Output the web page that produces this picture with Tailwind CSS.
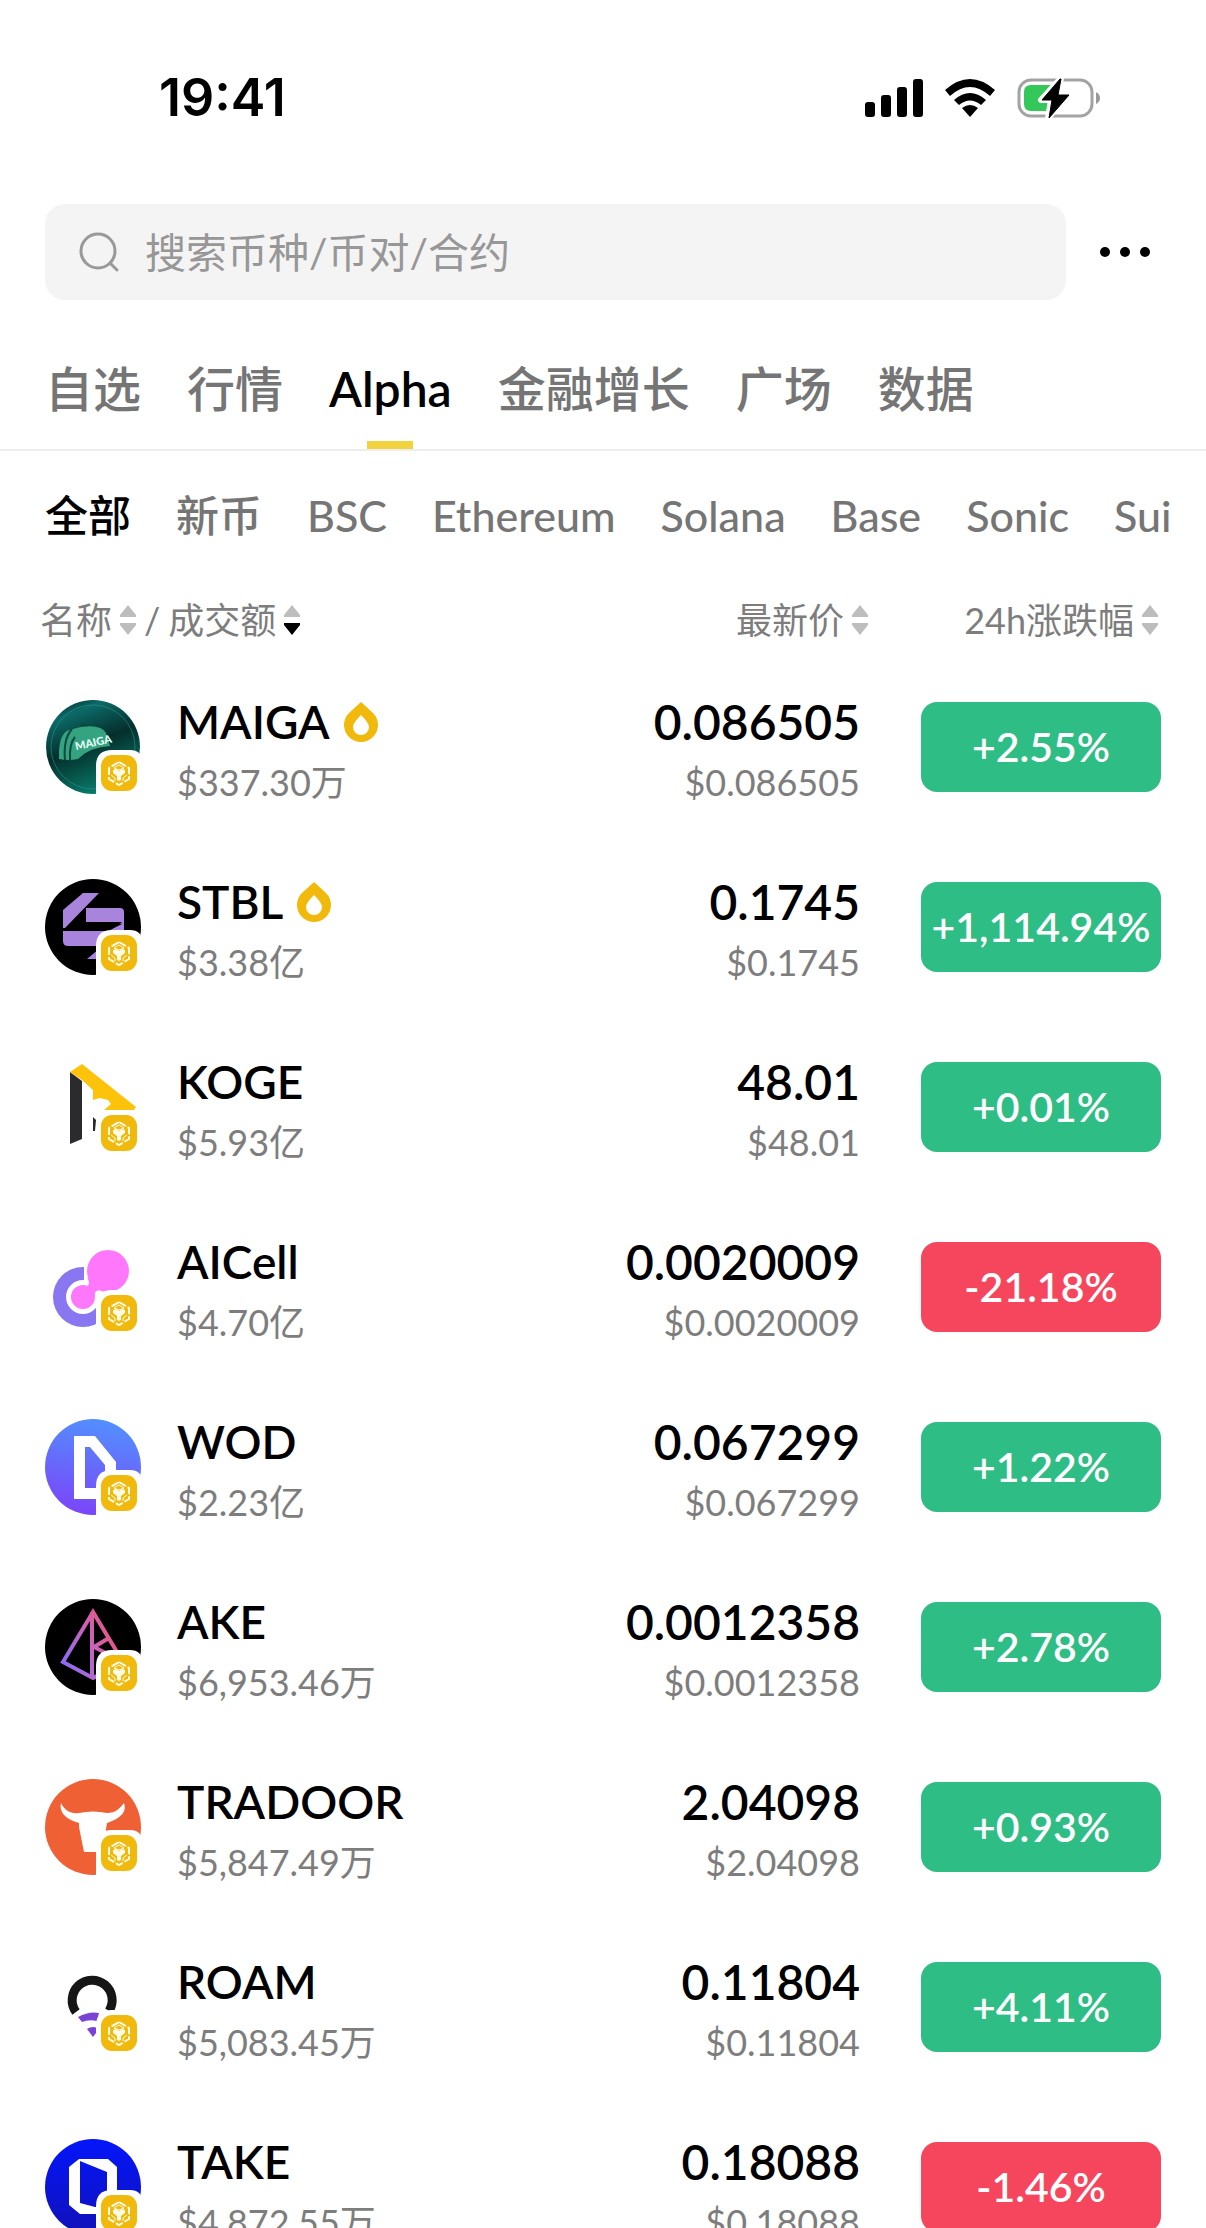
<!DOCTYPE html>
<html lang="zh-CN">
<head>
  <meta charset="utf-8">
  <meta name="viewport" content="width=device-width, initial-scale=1">
  <title>Alpha 行情</title>
  <script src="https://cdn.jsdelivr.net/npm/@tailwindcss/browser@4"></script>
</head>
<body class="flex h-screen flex-col overflow-hidden bg-white font-['Lato','Noto_Sans_CJK_SC',sans-serif] text-black">

  <!-- status bar -->
  <div class="flex h-[196px] shrink-0 items-center justify-between pr-[106px] pl-[159px]">
    <span class="font-['Inter',sans-serif] text-[52px] font-semibold">19:41</span>
    <div class="flex items-center gap-[22px]">
      <svg class="h-[38px] w-[58px]" viewBox="0 0 58 38">
        <rect x="0" y="23" width="10" height="15" rx="3"/>
        <rect x="16" y="16" width="10" height="22" rx="3"/>
        <rect x="32" y="8" width="10" height="30" rx="3"/>
        <rect x="48" y="0" width="10" height="38" rx="3"/>
      </svg>
      <svg class="h-[38px] w-[50px]" viewBox="0 0 50 38">
        <path d="M0 11Q25-11 50 11L45 17Q25-1 5 17Z"/>
        <path d="M9 21Q25 7 41 21L36 26Q25 17 14 26Z"/>
        <path d="M17 29Q25 23 33 29L25 38Z"/>
      </svg>
      <svg class="h-[42px] w-[83px]" viewBox="0 0 83 42">
        <rect x="2" y="3" width="73" height="36" rx="12" fill="none" stroke="#a3a3a3" stroke-width="3"/>
        <path d="M14 8H34V34H14Q7 34 7 27V15Q7 8 14 8Z" fill="#34c759"/>
        <path d="M79 15Q83 17 83 21T79 27Z" fill="#999"/>
        <path d="M44 1L24 23H34L31 41L52 18H41Z" stroke="#fff" stroke-width="6" stroke-linejoin="round"/>
        <path d="M43 2L25 23H35L32 41L52 18H41L44 2Z" stroke="#000" stroke-linejoin="round"/>
      </svg>
    </div>
  </div>

  <!-- search -->
  <div class="flex shrink-0 items-center pt-2 pr-[54px] pl-[45px]">
    <label class="flex h-24 flex-1 items-center gap-6 rounded-[20px] bg-[#f4f4f4] pl-[33px]">
      <svg class="size-[43px]" viewBox="0 0 43 43" fill="none" stroke="#999" stroke-width="3" stroke-linecap="round">
        <circle cx="20" cy="20" r="17"/>
        <path d="M33 33L39 39"/>
      </svg>
      <input type="text" aria-label="搜索" placeholder="搜索币种/币对/合约" class="h-full flex-1 text-[41px] outline-none placeholder:text-[#979797]">
    </label>
    <button type="button" aria-label="更多" class="ml-8 flex w-[54px] justify-center">
      <svg class="h-3 w-[50px]" viewBox="0 0 50 12">
        <circle cx="5" cy="6" r="5"/><circle cx="25" cy="6" r="5"/><circle cx="45" cy="6" r="5"/>
      </svg>
    </button>
  </div>

  <!-- main tabs -->
  <nav class="flex h-[151px] shrink-0 gap-[46px] border-b-2 border-[#eee] pl-[45px] text-[48px] font-medium whitespace-nowrap text-[#757575]">
    <a href="#" class="flex items-center pt-7">自选</a>
    <a href="#" class="flex items-center pt-7">行情</a>
    <a href="#" class="relative flex items-center pt-7 font-semibold text-black">Alpha<span class="absolute bottom-0 left-1/2 h-2 w-[46px] -translate-x-1/2 bg-[#f0d33f]"></span></a>
    <a href="#" class="flex items-center pt-7">金融增长</a>
    <a href="#" class="flex items-center pt-7">广场</a>
    <a href="#" class="flex items-center pt-7">数据</a>
  </nav>

  <!-- chain filter -->
  <nav class="flex h-[131px] shrink-0 items-center gap-[45px] overflow-hidden pl-[45px] text-[43px] font-medium whitespace-nowrap text-[#757575]">
    <a href="#" class="text-black">全部</a>
    <a href="#">新币</a>
    <a href="#">BSC</a>
    <a href="#">Ethereum</a>
    <a href="#">Solana</a>
    <a href="#">Base</a>
    <a href="#">Sonic</a>
    <a href="#">Sui</a>
  </nav>

  <!-- token list -->
  <table class="w-full">
    <thead>
      <tr class="h-[75px] text-[36px] whitespace-nowrap text-[#7d7d7d]">
        <th class="p-0 pl-10 font-normal">
          <div class="flex items-center gap-2">
            <button type="button" class="flex items-center gap-2">名称<svg class="h-[30px] w-4" viewBox="0 0 16 30" fill="#bdbdbd"><path d="M8 0L16 10V12H0V10Z"/><path d="M8 30L16 20V18H0V20Z"/></svg></button>
            <span>/</span>
            <button type="button" class="flex items-center gap-2">成交额<svg class="h-[30px] w-4" viewBox="0 0 16 30" fill="#bdbdbd"><path d="M8 0L16 10V12H0V10Z"/><path d="M8 30L16 20V18H0V20Z" fill="#000"/></svg></button>
          </div>
        </th>
        <th class="p-0 font-normal">
          <button type="button" class="ml-auto flex items-center gap-2">最新价<svg class="h-[30px] w-4" viewBox="0 0 16 30" fill="#bdbdbd"><path d="M8 0L16 10V12H0V10Z"/><path d="M8 30L16 20V18H0V20Z"/></svg></button>
        </th>
        <th class="w-[338px] p-0 pr-12 font-normal">
          <button type="button" class="ml-auto flex items-center gap-2">24h涨跌幅<svg class="h-[30px] w-4" viewBox="0 0 16 30" fill="#bdbdbd"><path d="M8 0L16 10V12H0V10Z"/><path d="M8 30L16 20V18H0V20Z"/></svg></button>
        </th>
      </tr>
    </thead>
    <tbody id="list"></tbody>
  </table>

  <script>
    const logos = {
      MAIGA: `
        <defs><linearGradient id="maiga" x1="0.2" y1="0" x2="0.6" y2="1"><stop offset="0" stop-color="#06302f"/><stop offset="0.15" stop-color="#0b6a68"/><stop offset="0.5" stop-color="#052e2b"/><stop offset="1" stop-color="#08826f"/></linearGradient></defs>
        <circle cx="48" cy="48" r="47" fill="url(#maiga)"/>
        <circle cx="48" cy="48" r="42" fill="none" stroke="#2a8f88" stroke-width="1" opacity="0.6"/>
        <path d="M14 60Q13 35 24 31L36 28Q56 25 61 34L65 47Q45 48 33 60Q24 62 14 60Z" fill="#35a37f"/>
        <path d="M20 61Q18 40 27 30M25 62Q24 45 30 38M36 27Q39 24 42 27" fill="none" stroke="#0a4a40" stroke-width="2"/>
        <text x="31" y="51" transform="rotate(-12 32 51)" font-family="Lato, sans-serif" font-size="11" font-weight="900" fill="#e4fff6">MAIGA</text>`,
      STBL: `
        <circle cx="48" cy="48" r="48"/>
        <g fill="#a884dc"><path d="M38 14H54L20 49H18V31Z"/><path d="M41 29H75Q79 29 79 33V45L68 44H41Z"/><path d="M18 52H63L79 44V52L52 67H23Q18 67 18 62Z"/><path d="M42 80L54 70V80Z"/></g>
        <path d="M41 43H77L64 52H18Z"/>`,
      KOGE: `
        <path d="M25 13L37 22V80L25 85Z" fill="#2b2b2e"/>
        <path d="M37 5L91 48L89 51H59L66 45L63 41L55 39L48 41V31L37 21L25 13Z" fill="#fdc20a"/>
        <path d="M48 58L51 61L50 72H48Z" fill="#2b2b2e"/>`,
      AICell: `
        <circle cx="38" cy="58" r="30" fill="#8877f0"/>
        <circle cx="38" cy="58" r="17" fill="#fff"/>
        <path d="M39 26H72V58H52L39 42Z" fill="#fff"/>
        <circle cx="63" cy="32" r="21" fill="#ff78fb"/>
        <circle cx="38" cy="58" r="12" fill="#ff78fb"/>
        <path d="M42 38Q46 46 42 47L49 57Q50 50 57 51Z" fill="#ff78fb"/>`,
      WOD: `
        <defs><linearGradient id="wod" x1="0.6" y1="0" x2="0.4" y2="1"><stop offset="0" stop-color="#5290ff"/><stop offset="1" stop-color="#7b45f8"/></linearGradient></defs>
        <circle cx="48" cy="48" r="48" fill="url(#wod)"/>
        <path fill-rule="evenodd" d="M29 17H50L71 43V80H29ZM40 28V69H60V46L45 28Z" fill="#fff"/>`,
      AKE: `
        <defs><linearGradient id="ake" x1="0" y1="0.8" x2="1" y2="0.3"><stop offset="0" stop-color="#8a6cf5"/><stop offset="0.5" stop-color="#c963bd"/><stop offset="1" stop-color="#f2526c"/></linearGradient></defs>
        <circle cx="48" cy="48" r="48"/>
        <path d="M48 13L18 63L48 79L78 63ZM47 13V79M64 39L49 48L72 60" fill="none" stroke="url(#ake)" stroke-width="4"/>`,
      TRADOOR: `
        <circle cx="48" cy="48" r="48" fill="#ef6035"/>
        <path d="M16 24C20 32 26 35 34 34Q48 31 62 34C71 34 75 29 79 24C82 32 77 39 62 44L60 56L56 73H39L34 48V44C19 40 14 32 16 24Z" fill="#fff"/>`,
      ROAM: `
        <path d="M31 53A20 20 0 1 1 64 52" fill="none" stroke="#161616" stroke-width="9"/>
        <path d="M33 58Q44 52 54 54L52 62Q44 60 37 63Z" fill="#7a43d6"/>
        <path d="M42 70Q48 66 54 70L48 78Z" fill="#7a43d6"/>`,
      TAKE: `
        <defs><linearGradient id="take" x1="0" y1="0" x2="0" y2="1"><stop offset="0" stop-color="#0416fa"/><stop offset="1" stop-color="#1111b8"/></linearGradient></defs>
        <circle cx="48" cy="48" r="48" fill="url(#take)"/>
        <path fill-rule="evenodd" d="M34 20H63L72 28V66L62 75H35L24 66V28ZM35 22V64L50 68H62V33Z" fill="#fff"/>`
    };

    const tokens = [
      { name: "MAIGA", hot: true, volume: "$337.30万", price: "0.086505", change: "+2.55%" },
      { name: "STBL", hot: true, volume: "$3.38亿", price: "0.1745", change: "+1,114.94%" },
      { name: "KOGE", volume: "$5.93亿", price: "48.01", change: "+0.01%" },
      { name: "AICell", volume: "$4.70亿", price: "0.0020009", change: "-21.18%" },
      { name: "WOD", volume: "$2.23亿", price: "0.067299", change: "+1.22%" },
      { name: "AKE", volume: "$6,953.46万", price: "0.0012358", change: "+2.78%" },
      { name: "TRADOOR", volume: "$5,847.49万", price: "2.04098", change: "+0.93%" },
      { name: "ROAM", volume: "$5,083.45万", price: "0.11804", change: "+4.11%" },
      { name: "TAKE", volume: "$4,872.55万", price: "0.18088", change: "-1.46%" }
    ];

    // BNB chain badge
    const badge = `
      <svg class="absolute -right-px -bottom-px size-[46px]" viewBox="0 0 46 46">
        <path d="M0 16Q0 0 16 0H34Q46 0 46 12V46H0Z" fill="#fff"/>
        <rect x="5" y="5" width="36" height="36" rx="11" fill="#f0b90b"/>
        <path d="M23 12L33 18V29L23 35L13 29V18Z" fill="none" stroke="#fffbe6" stroke-width="2" stroke-dasharray="8 2"/>
        <path d="M23 15L28 18L23 20L18 18Z" fill="none" stroke="#fffbe6"/>
        <path d="M17 20L20 19L23 21L26 19L29 20V23L25 26V30L23 31L21 30V26L17 23Z" fill="#fffbe6"/>
        <path d="M15 25L19 28V31M31 25L27 28V31" fill="none" stroke="#fffbe6"/>
      </svg>`;

    const flame = `
      <svg class="h-[41px] w-[35px]" viewBox="0 0 35 41">
        <path d="M17 0L29 11A17 17 0 1 1 5 11Z" fill="#f0b90b"/>
        <path d="M17 13Q25 21 25 25A8 8 0 0 1 9 25Q9 21 17 13Z" fill="#fff"/>
      </svg>`;

    document.getElementById("list").innerHTML = tokens.map(t => {
      const color = t.change.startsWith("-") ? "bg-[#f6465d]" : "bg-[#2ebd85]";
      return `
        <tr class="h-[180px] align-top whitespace-nowrap">
          <td class="p-0 pl-[45px]">
            <div class="flex gap-9">
              <div class="relative mt-[42px] size-24">
                <svg class="size-24" viewBox="0 0 96 96">${logos[t.name]}</svg>
                ${badge}
              </div>
              <div class="pt-[35px]">
                <div class="flex items-center gap-3.5 text-[46px] leading-[60px] font-semibold">${t.name}${t.hot ? flame : ""}</div>
                <div class="text-[36px] leading-[60px] text-[#7d7d7d]">${t.volume}</div>
              </div>
            </div>
          </td>
          <td class="p-0 pt-[35px] pr-2 text-right">
            <div class="text-[48px] leading-[60px] font-semibold">${t.price}</div>
            <div class="text-[36px] leading-[60px] text-[#7d7d7d]">$${t.price}</div>
          </td>
          <td class="p-0 pt-[45px] pr-[45px]">
            <button type="button" class="ml-auto flex h-[90px] w-[240px] items-center justify-center rounded-2xl text-[41px] font-semibold text-white ${color}">${t.change}</button>
          </td>
        </tr>`;
    }).join("");
  </script>
</body>
</html>
